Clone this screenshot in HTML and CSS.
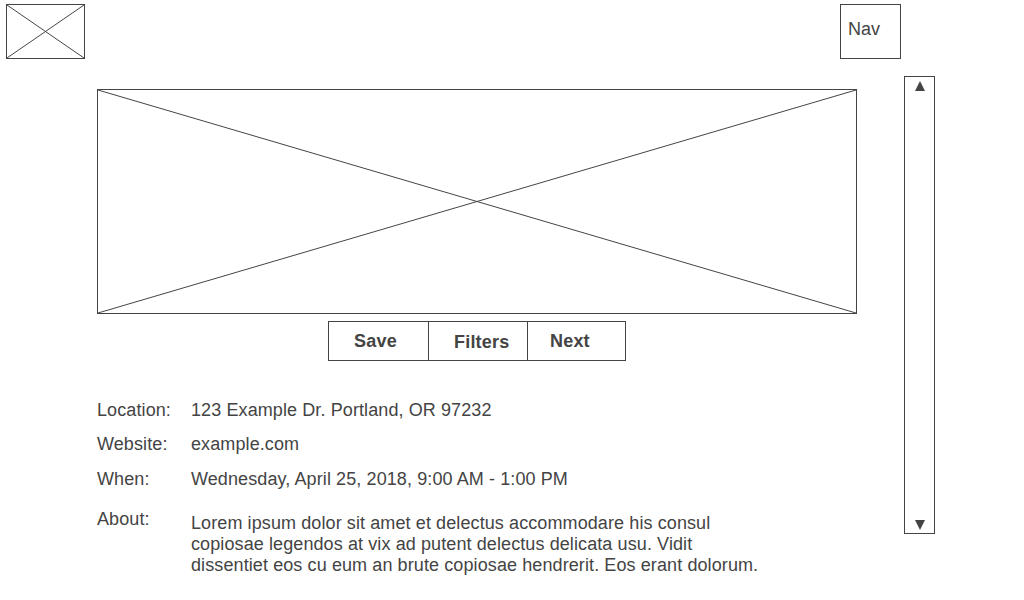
FILE: index.html
```html
<!DOCTYPE html>
<html lang="en">
<head>
<meta charset="utf-8">
<title>Event Detail</title>
<link rel="stylesheet" href="styles.css">
</head>
<body>
<div class="page">
  <header class="header">
    <div class="logo">
      <svg class="xsvg" viewBox="0 0 100 100" preserveAspectRatio="none"><line x1="0" y1="0" x2="100" y2="100" vector-effect="non-scaling-stroke"/><line x1="100" y1="0" x2="0" y2="100" vector-effect="non-scaling-stroke"/></svg>
    </div>
    <div class="nav">Nav</div>
  </header>
  <div class="body">
    <main class="main">
      <div class="hero">
        <svg class="xsvg" viewBox="0 0 100 100" preserveAspectRatio="none"><line x1="0" y1="0" x2="100" y2="100" vector-effect="non-scaling-stroke"/><line x1="100" y1="0" x2="0" y2="100" vector-effect="non-scaling-stroke"/></svg>
      </div>
      <div class="btn-row">
        <div class="btn-group">
          <div class="btn btn-save">Save</div>
          <div class="btn btn-filters">Filters</div>
          <div class="btn btn-next">Next</div>
        </div>
      </div>
      <div class="details">
        <div class="row row-loc"><div class="label">Location:</div><div class="value">123 Example Dr. Portland, OR 97232</div></div>
        <div class="row row-web"><div class="label">Website:</div><div class="value">example.com</div></div>
        <div class="row row-when"><div class="label">When:</div><div class="value">Wednesday, April 25, 2018, 9:00 AM - 1:00 PM</div></div>
        <div class="row row-about"><div class="label">About:</div><div class="value about">Lorem ipsum dolor sit amet et delectus accommodare his consul copiosae legendos at vix ad putent delectus delicata usu. Vidit dissentiet eos cu eum an brute copiosae hendrerit. Eos erant dolorum.</div></div>
      </div>
    </main>
    <aside class="scrollbar">
      <svg class="arrow" viewBox="0 0 10 10"><polygon points="5,0 10,10 0,10"/></svg>
      <svg class="arrow" viewBox="0 0 10 10"><polygon points="0,0 10,0 5,10"/></svg>
    </aside>
  </div>
</div>
</body>
</html>
```
FILE: styles.css
```css
* { box-sizing: border-box; }
html, body { margin: 0; padding: 0; background: #fff; }
body {
  font-family: "Liberation Sans", Arial, sans-serif;
  color: #444;
  font-size: 18px;
  line-height: 21px;
}
.page { width: 1024px; height: 600px; overflow: hidden; }
.header {
  display: flex;
  justify-content: space-between;
  align-items: flex-start;
  padding: 4px 123px 0 6px;
}
.logo {
  width: 79px;
  height: 55px;
  border: 1px solid #444;
}
.xsvg { display: block; width: 100%; height: 100%; }
.xsvg line { stroke: #444; stroke-width: 1; }
.nav {
  width: 61px;
  height: 55px;
  border: 1px solid #444;
  padding: 14px 0 0 7px;
}
.body { display: flex; align-items: flex-start; }
.main {
  margin-left: 97px;
  margin-top: 30px;
  width: 760px;
}
.hero {
  width: 760px;
  height: 225px;
  border: 1px solid #444;
}
.btn-row { display: flex; justify-content: center; margin-top: 7px; }
.btn-group {
  display: flex;
  border: 1px solid #444;
  height: 40px;
}
.btn {
  width: 99px;
  font-weight: bold;
  padding-left: 25px;
  padding-top: 9px;
  letter-spacing: 0.2px;
}
.btn + .btn { border-left: 1px solid #444; }
.btn-filters { padding-top: 10px; }
.btn-next { padding-left: 22px; width: 98px; }
.details { margin-top: 39px; letter-spacing: 0.1px; }
.row { display: flex; }
.row-web { margin-top: 13px; }
.row-when { margin-top: 14px; }
.row-about { margin-top: 19px; }
.label { width: 94px; flex: none; }
.about { width: 576px; padding-top: 4px; }
.scrollbar {
  margin-left: 47px;
  margin-top: 17px;
  width: 31px;
  height: 458px;
  border: 1px solid #444;
  display: flex;
  flex-direction: column;
  justify-content: space-between;
  align-items: center;
  padding: 4px 0 3px;
}
.arrow { width: 10px; height: 10px; display: block; }
.arrow polygon { fill: #444; }
```
